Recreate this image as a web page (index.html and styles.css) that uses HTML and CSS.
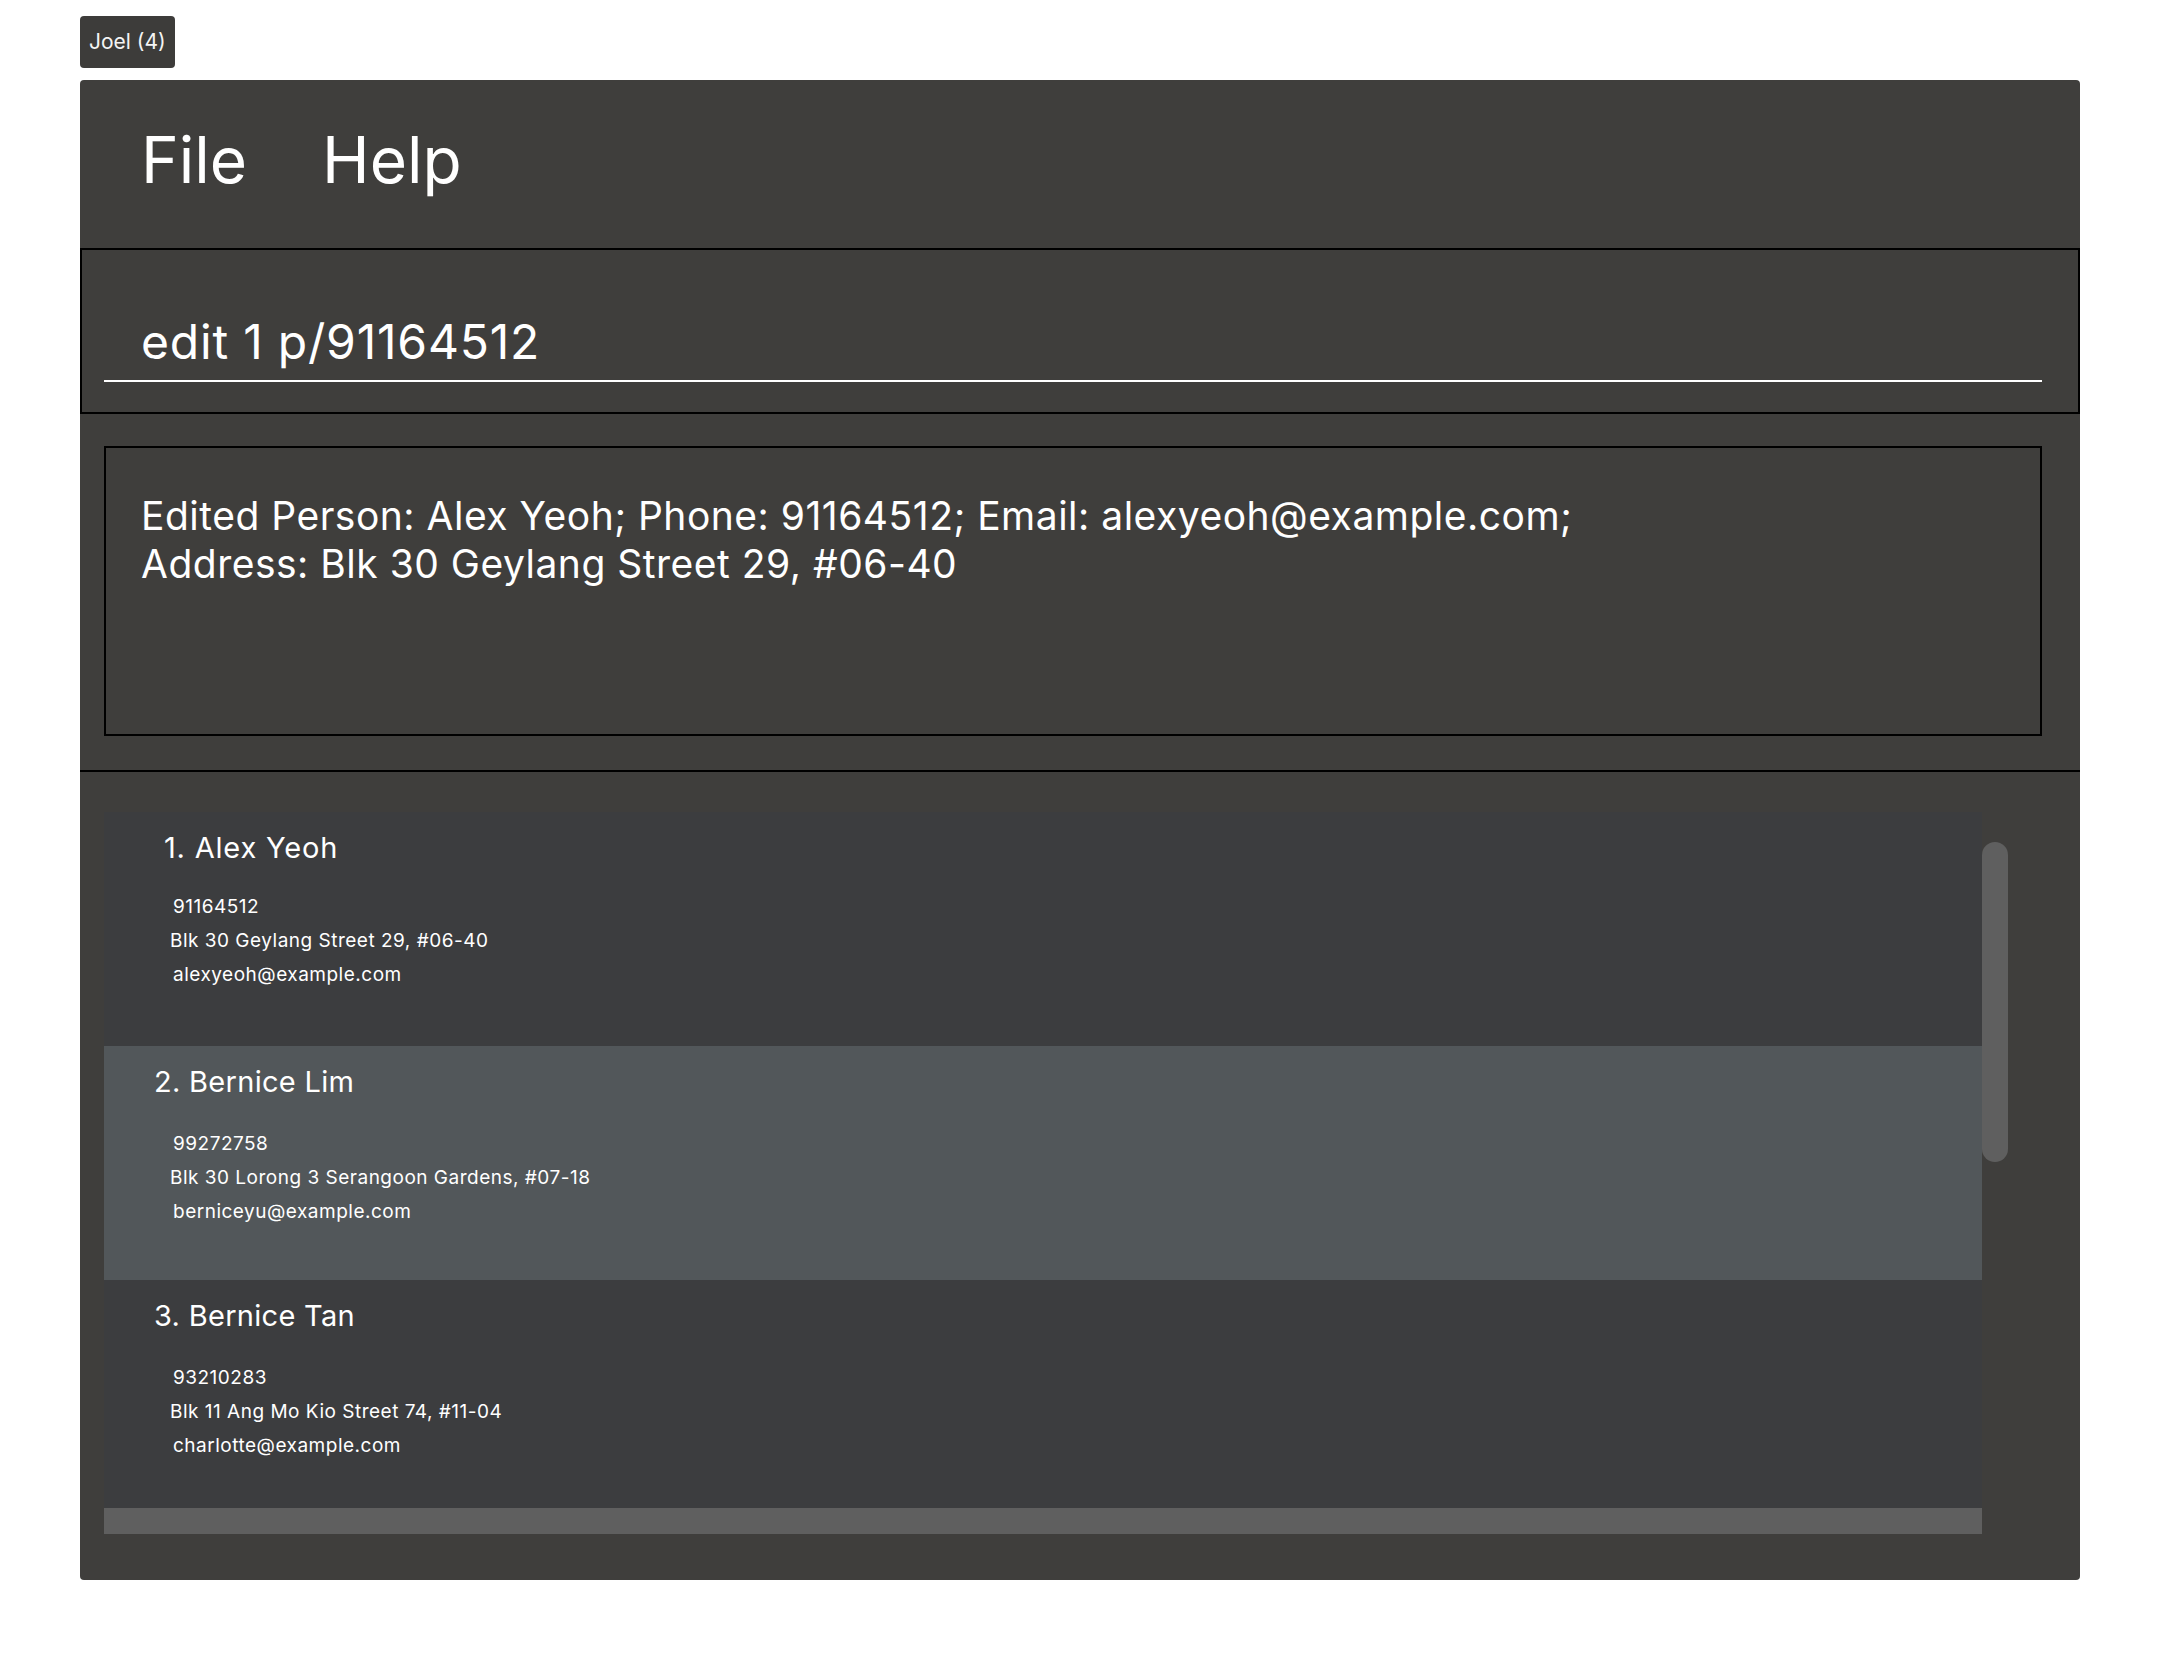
FILE: index.html
```html
<!DOCTYPE html>
<html>
<head>
<meta charset="utf-8">
<title>Address Book</title>
<link rel="stylesheet" href="styles.css">
</head>
<body>
<div class="badge">Joel (4)</div>
<div class="window">
  <div class="menubar">
    <span class="menu-item">File</span>
    <span class="menu-item">Help</span>
  </div>
  <div class="command">
    <div class="cmd-field"><span class="cmd-text">edit 1 p/91164512</span></div>
  </div>
  <div class="result-wrap">
    <div class="result">Edited Person: Alex Yeoh; Phone: 91164512; Email: alexyeoh@example.com;<br>Address: Blk 30 Geylang Street 29, #06-40</div>
  </div>
  <div class="list-panel">
    <div class="list-row">
      <div class="viewport">
        <div class="card card-first">
          <div class="name name-wide">1. Alex Yeoh</div>
          <div class="details">
            <div class="line shifted">91164512</div>
            <div class="line">Blk 30 Geylang Street 29, #06-40</div>
            <div class="line shifted">alexyeoh@example.com</div>
          </div>
        </div>
        <div class="card selected">
          <div class="name">2. Bernice Lim</div>
          <div class="details">
            <div class="line shifted">99272758</div>
            <div class="line">Blk 30 Lorong 3 Serangoon Gardens, #07-18</div>
            <div class="line shifted">berniceyu@example.com</div>
          </div>
        </div>
        <div class="card">
          <div class="name">3. Bernice Tan</div>
          <div class="details">
            <div class="line shifted">93210283</div>
            <div class="line">Blk 11 Ang Mo Kio Street 74, #11-04</div>
            <div class="line shifted">charlotte@example.com</div>
          </div>
        </div>
      </div>
      <div class="vtrack"><div class="vthumb"></div></div>
    </div>
    <div class="hscroll"></div>
  </div>
</div>
</body>
</html>
```

FILE: styles.css
```css
html, body {
  margin: 0;
  padding: 0;
  background: #ffffff;
}
body {
  font-family: Inter, "Noto Sans", "Liberation Sans", sans-serif;
  color: #ffffff;
}
.badge {
  margin: 16px 0 0 80px;
  width: 95px;
  height: 52px;
  box-sizing: border-box;
  background: #3d3c3a;
  border-radius: 4px;
  font-size: 21px;
  line-height: 52px;
  padding-left: 9px;
  color: #f4f4f4;
}
.window {
  margin: 12px 0 0 80px;
  width: 2000px;
  height: 1500px;
  background: #3f3e3c;
  border-radius: 4px;
  overflow: hidden;
}
.menubar {
  height: 168px;
  box-sizing: border-box;
  display: flex;
  gap: 75px;
  padding: 48px 0 0 61px;
}
.menu-item {
  font-size: 64px;
  line-height: 64px;
}
.command {
  height: 166px;
  box-sizing: border-box;
  border: 2px solid #000;
  padding: 68px 36px 0 22px;
}
.cmd-field {
  border-bottom: 2px solid #ffffff;
  padding: 0 0 14px 37px;
}
.cmd-text {
  display: block;
  font-size: 48px;
  line-height: 48px;
  letter-spacing: 0.8px;
}
.result-wrap {
  padding: 32px 38px 34px 24px;
  border-bottom: 2px solid #000;
}
.result {
  height: 290px;
  box-sizing: border-box;
  border: 2px solid #000;
  padding: 44px 0 0 35px;
  font-size: 39px;
  line-height: 48px;
  letter-spacing: 0.5px;
}
.list-panel {
  padding: 40px 0 0 24px;
}
.list-row {
  display: flex;
}
.viewport {
  width: 1878px;
  height: 696px;
  overflow: hidden;
}
.card {
  height: 234px;
  box-sizing: border-box;
  background: #3c3d3f;
  padding: 21px 0 0 50px;
}
.card-first {
  padding-left: 60px;
}
.card.selected {
  background: #52575a;
}
.name {
  font-size: 29px;
  line-height: 29px;
  letter-spacing: 0.3px;
}
.name.name-wide {
  letter-spacing: 0.8px;
}
.details {
  margin-top: 31px;
  margin-left: 16px;
}
.card-first .details {
  margin-top: 28px;
  margin-left: 6px;
}
.line {
  font-size: 19px;
  line-height: 34px;
  letter-spacing: 0.5px;
}
.line.shifted {
  padding-left: 3px;
}
.vtrack {
  width: 26px;
  height: 696px;
}
.vthumb {
  margin-top: 30px;
  width: 26px;
  height: 320px;
  border-radius: 13px;
  background: #5f5f5f;
}
.hscroll {
  width: 1878px;
  height: 26px;
  background: #5f5f5f;
}
```
